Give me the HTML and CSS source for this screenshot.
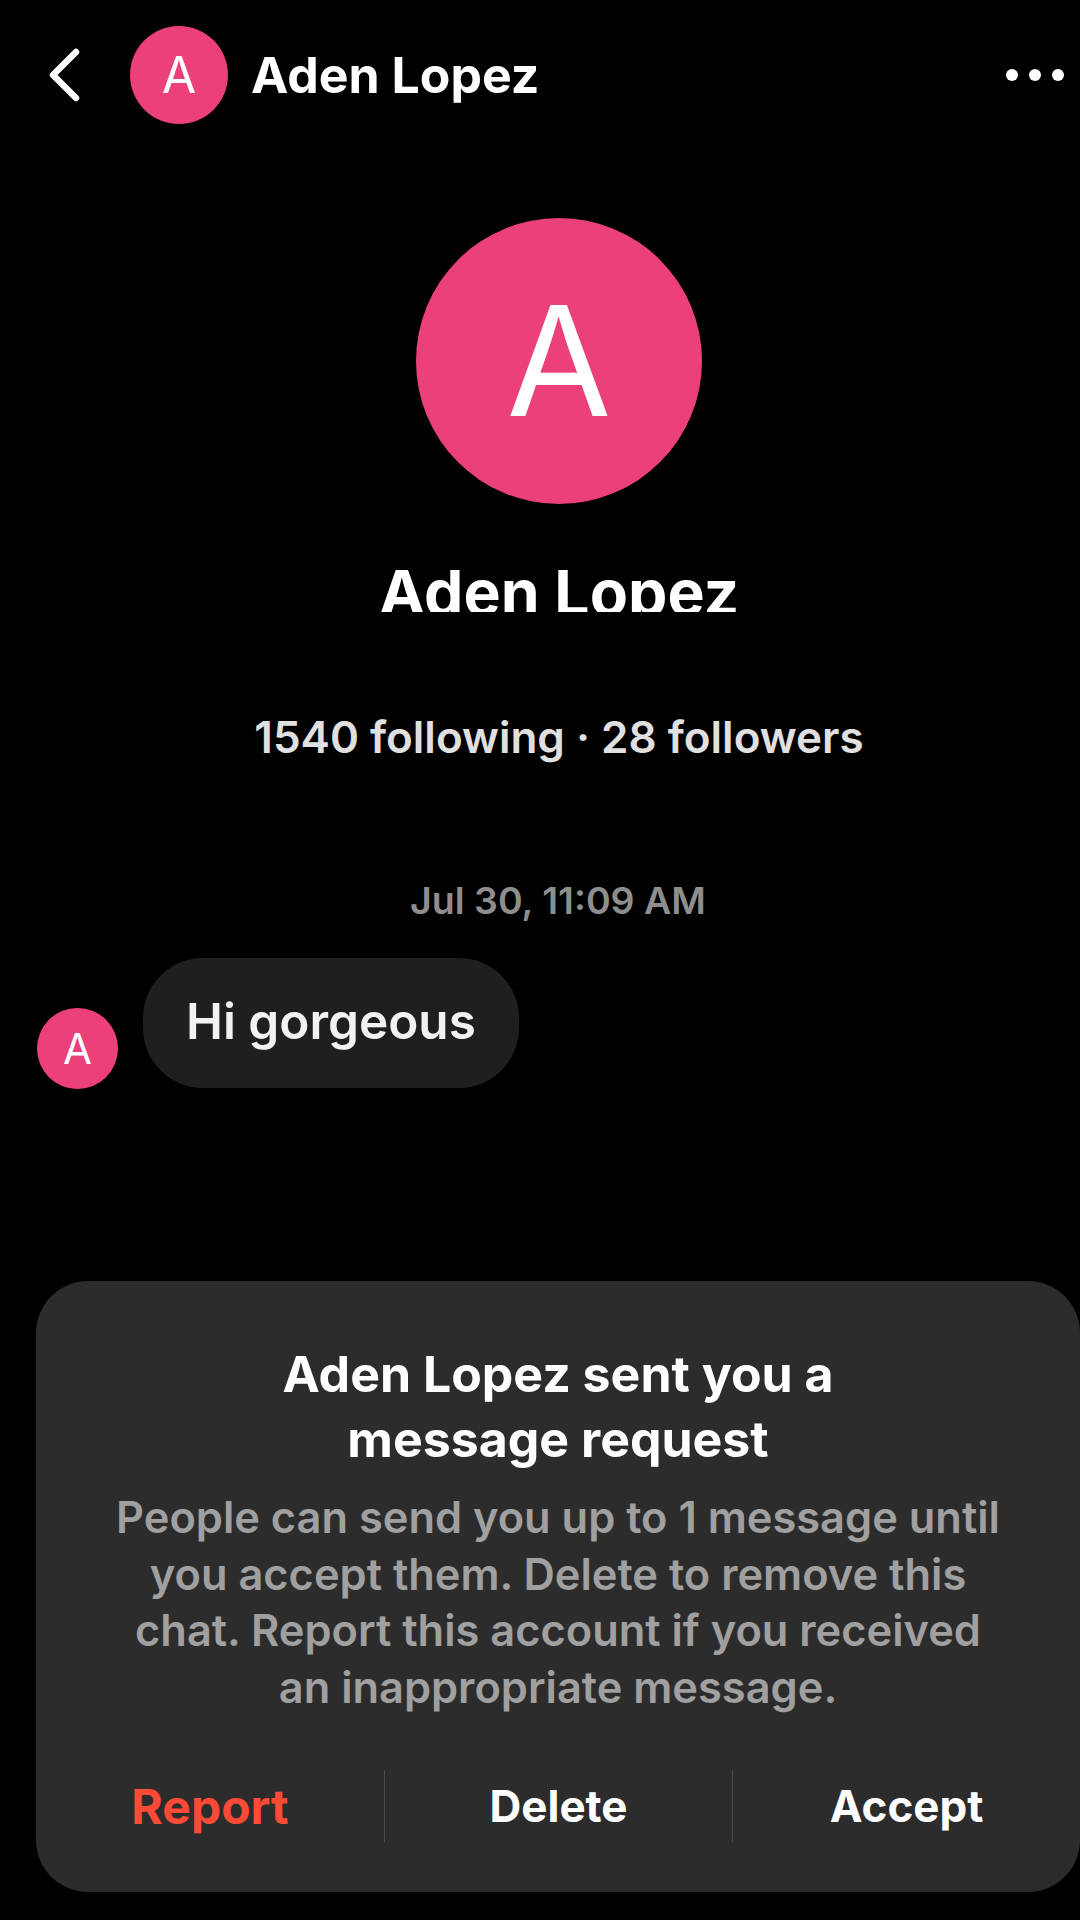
FILE: index.html
```html
<!DOCTYPE html>
<html lang="en">
<head>
    <meta name="viewport" content="width=device-width, initial-scale=1">
    <meta charset="UTF-8">
    <title>Aden Lopez</title>
    <link rel="stylesheet" href="styles.css">
</head>
<body>
    <div class="screen">
        <header class="topbar">
            <svg class="back" width="34" height="54" viewBox="0 0 34 54">
                <polyline points="29,4 6,27 29,50" fill="none" stroke="#fff" stroke-width="6.5" stroke-linecap="round" stroke-linejoin="round"/>
            </svg>
            <div class="avatar avatar-top">A</div>
            <div class="topbar-name">Aden Lopez</div>
            <svg class="more" width="60" height="14" viewBox="0 0 60 14">
                <circle cx="7" cy="7" r="6" fill="#fff"/>
                <circle cx="30" cy="7" r="6" fill="#fff"/>
                <circle cx="53" cy="7" r="6" fill="#fff"/>
            </svg>
        </header>

        <section class="profile">
            <div class="avatar avatar-big">A</div>
            <h1 class="profile-name">Aden Lopez</h1>
            <p class="stats">1540 following · 28 followers</p>
        </section>

        <p class="date">Jul 30, 11:09 AM</p>

        <div class="message">
            <div class="avatar avatar-msg">A</div>
            <div class="bubble">Hi gorgeous</div>
        </div>

        <section class="request">
            <h2 class="request-title">Aden Lopez sent you a<br>message request</h2>
            <p class="request-text">People can send you up to 1 message until<br>you accept them. Delete to remove this<br>chat. Report this account if you received<br>an inappropriate message.</p>
            <div class="actions">
                <button class="action report">Report</button>
                <button class="action">Delete</button>
                <button class="action">Accept</button>
            </div>
        </section>
    </div>
</body>
</html>
```

FILE: styles.css
```css
* {
    box-sizing: border-box;
}

body {
    margin: 0;
    background-color: #000;
    font-family: Inter, "Noto Sans", sans-serif;
    color: #fff;
}

.screen {
    height: 1920px;
    overflow: hidden;
    display: flex;
    flex-direction: column;
}

.topbar {
    display: flex;
    align-items: center;
    height: 98px;
    margin-top: 26px;
    padding: 0 15px 0 47px;
}

.back {
    margin-right: 49px;
}

.avatar {
    display: flex;
    align-items: center;
    justify-content: center;
    flex-shrink: 0;
    border-radius: 50%;
    background-color: #ec407a;
    color: #fff;
}

.avatar-top {
    width: 98px;
    height: 98px;
    font-size: 50px;
}

.topbar-name {
    flex: 1;
    margin-left: 23px;
    font-size: 50px;
    font-weight: 700;
}

.profile {
    display: flex;
    flex-direction: column;
    align-items: center;
    padding: 94px 0 0 38px;
}

.avatar-big {
    width: 286px;
    height: 286px;
    font-size: 152px;
    font-weight: 400;
}

.profile-name {
    height: 51px;
    margin: 57px 0 0;
    overflow: hidden;
    font-size: 62.5px;
    line-height: 62px;
    font-weight: 700;
}

.stats {
    margin: 101px 0 0;
    font-size: 44px;
    line-height: 48px;
    font-weight: 600;
    color: #e0e0e0;
}

.date {
    margin: 119px 0 0 36px;
    text-align: center;
    font-size: 37.5px;
    line-height: 42px;
    font-weight: 600;
    color: #8e8e8e;
}

.message {
    display: flex;
    align-items: flex-end;
    gap: 25px;
    margin-top: 36px;
    padding-left: 37px;
}

.avatar-msg {
    width: 81px;
    height: 81px;
    font-size: 42px;
}

.bubble {
    display: flex;
    align-items: center;
    height: 130px;
    padding: 0 43px 4px;
    margin-bottom: 1px;
    border-radius: 60px;
    background-color: #1f1f1f;
    font-size: 49.5px;
    font-weight: 600;
    color: #f2f2f2;
}

.request {
    height: 611px;
    margin: 192px 0 0 36px;
    padding-top: 61px;
    border-radius: 52px;
    background-color: #2c2c2c;
    text-align: center;
}

.request-title {
    margin: 0;
    font-size: 50px;
    line-height: 65px;
    font-weight: 700;
}

.request-text {
    margin: 17px 0 0;
    font-size: 43.4px;
    line-height: 56.5px;
    font-weight: 600;
    color: #a0a0a0;
}

.actions {
    display: grid;
    grid-template-columns: 1fr 1fr 1fr;
    height: 72px;
    margin-top: 55px;
}

.action {
    border: none;
    border-left: 1px solid #4a4a4a;
    padding: 0;
    background: none;
    font-family: inherit;
    font-size: 44px;
    font-weight: 700;
    color: #fff;
}

.action.report {
    border-left: none;
    font-size: 48px;
    color: #fb4a36;
}
```
